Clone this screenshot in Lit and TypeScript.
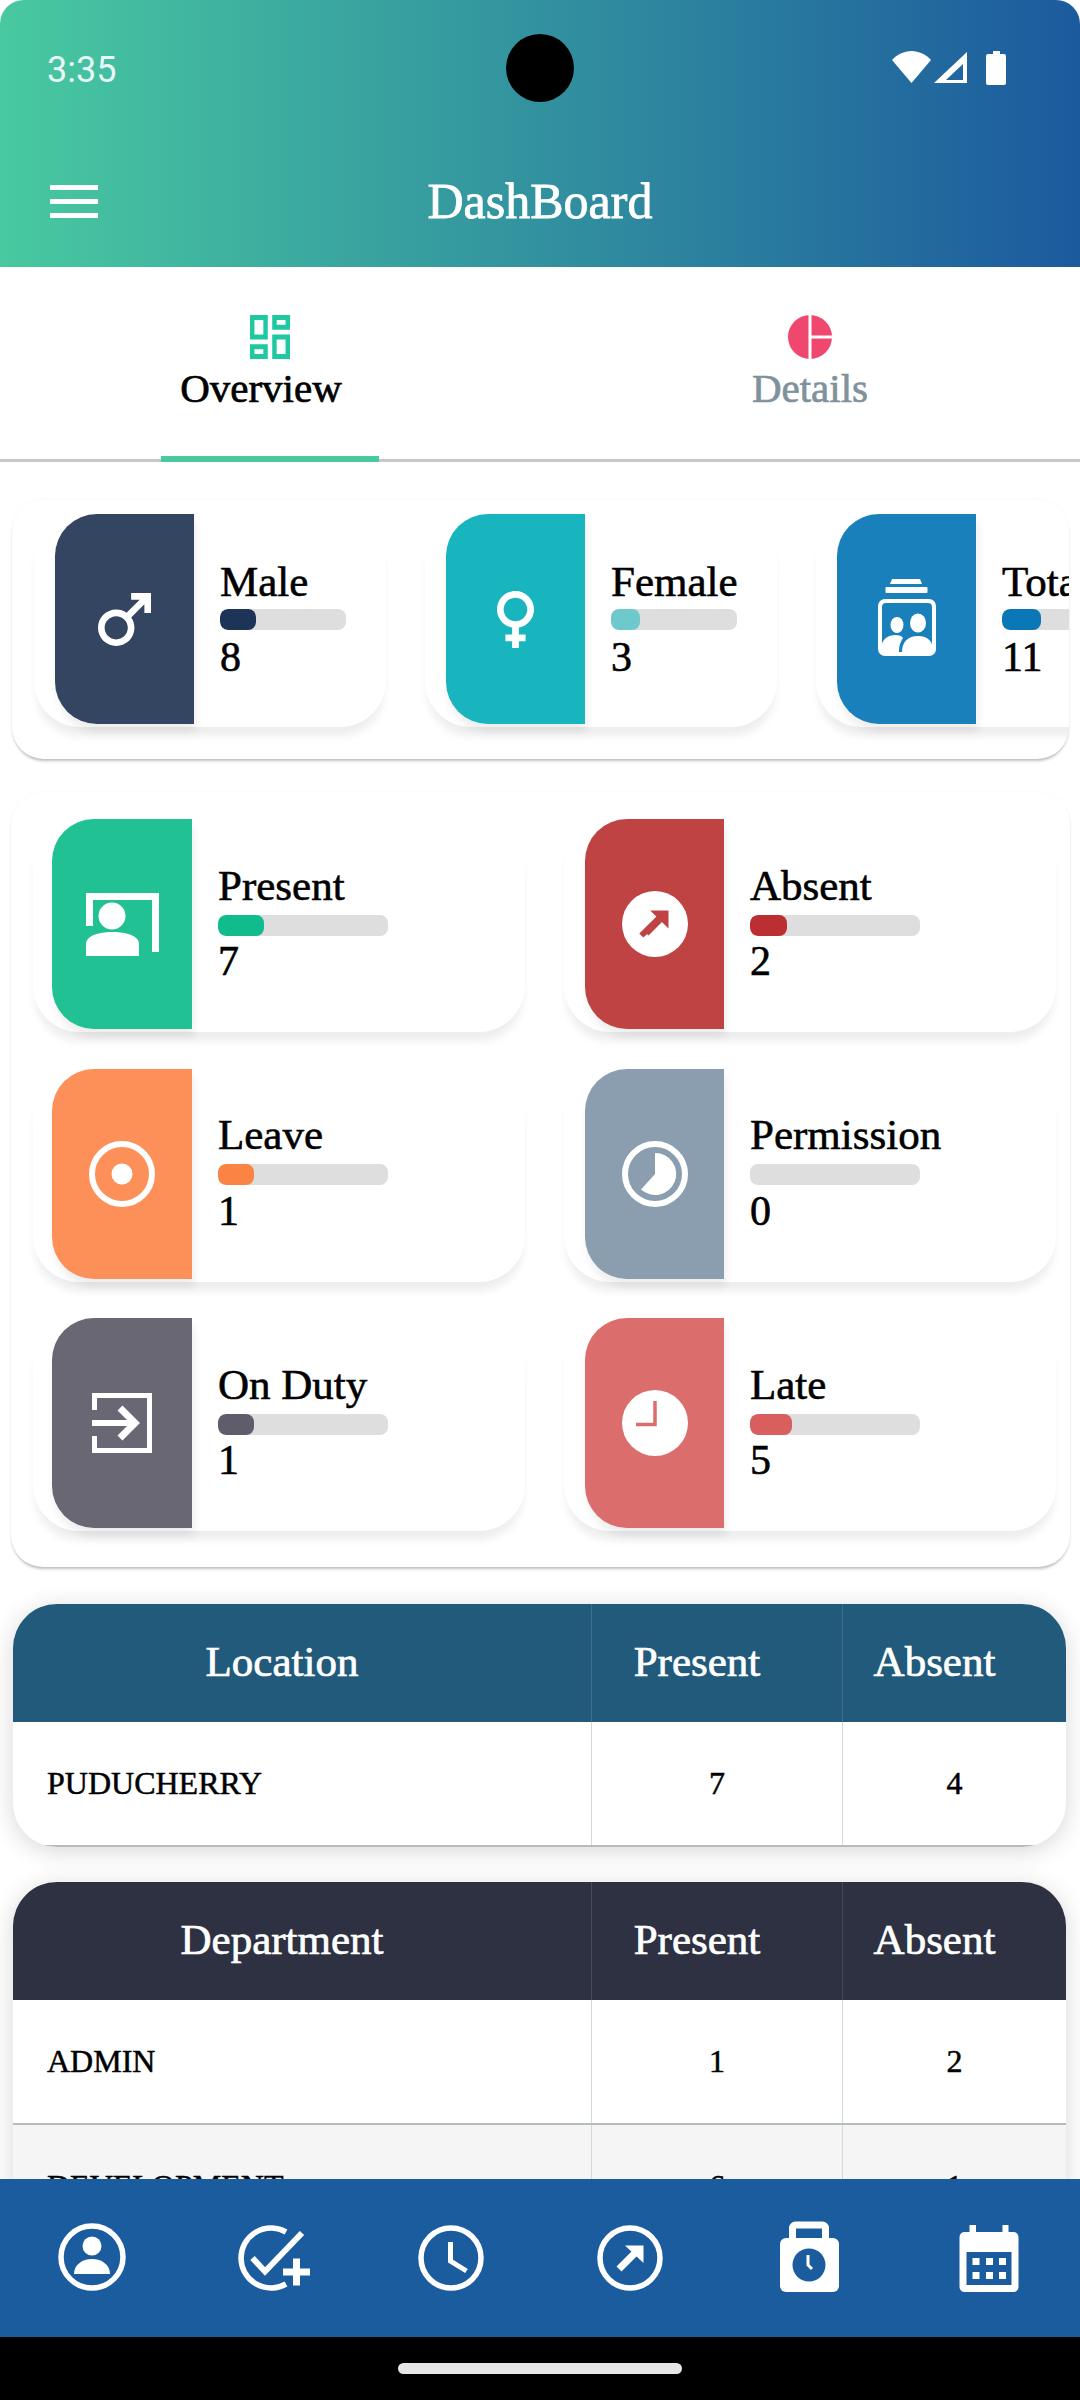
import { LitElement, html, css, svg } from 'lit';
import { customElement } from 'lit/decorators.js';

type Stat = { label: string; value: string; color: string; fill: string; width: number; icon: unknown };

// panel icons
const maleIcon = html`<svg width="53" height="53" viewBox="4 4 16 16" fill="#fff"><path d="M9.5 11c1.93 0 3.5 1.57 3.5 3.5S11.43 18 9.5 18 6 16.43 6 14.5 7.57 11 9.5 11zm0-2C6.46 9 4 11.46 4 14.5S6.46 20 9.5 20s5.5-2.46 5.5-5.5c0-1.16-.36-2.23-.97-3.12L18 7.42V10h2V4h-6v2h2.58l-3.97 3.97C11.73 9.36 10.66 9 9.5 9z"/></svg>`;
const femaleIcon = html`<svg width="37" height="57" viewBox="6.5 4 11 17" preserveAspectRatio="none" fill="#fff"><path d="M17.5 9.5C17.5 6.46 15.04 4 12 4S6.5 6.46 6.5 9.5c0 2.7 1.94 4.93 4.5 5.4V17H9v2h2v2h2v-2h2v-2h-2v-2.1c2.56-.47 4.5-2.7 4.5-5.4zm-9 0C8.5 7.57 10.07 6 12 6s3.5 1.57 3.5 3.5S13.93 13 12 13s-3.5-1.57-3.5-3.5z"/></svg>`;
const totalIcon = html`<svg class="jar" width="58" height="77" viewBox="0 0 58 77" fill="#fff">
  <path d="M14 0h28l2 5H12z"/><rect x="7.5" y="8" width="42" height="6" rx="1"/>
  <rect x="0" y="20" width="58" height="57" rx="7"/>
  <rect x="4" y="24" width="50" height="49" rx="4" fill="#1a80bb"/>
  <ellipse cx="19" cy="46" rx="6.5" ry="8"/><ellipse cx="40" cy="44" rx="8" ry="9.5"/>
  <path d="M4 73V66C4 60 11 56 17 56c4 0 7 1 8 3-2 3-4 7-4 14z"/>
  <path d="M24 73c0-10 6-16 16-16s15 6 15 14v2z"/>
</svg>`;
const presentIcon = html`<svg width="73" height="63" viewBox="0 0 73 63" fill="#fff">
  <path d="M0 0h73v59h-7V7H7v26H0z"/><circle cx="26" cy="23" r="13.5"/>
  <path d="M0 63V51c0-8 12-12 26.500-12S53 43 53 51v12z"/>
</svg>`;
const absentIcon = html`<svg width="66" height="66" viewBox="-33 -33 66 66">
  <circle r="33" fill="#fff"/>
  <path d="M-4.800 -13.500H13.500V4.500zM-11.700 13.500l-4-4L3 -9l4 6z" fill="#bf4343"/>
  <path d="M-9 9L7 -7" stroke="#bf4343" stroke-width="7" fill="none"/>
</svg>`;
const leaveIcon = html`<svg width="66" height="66" viewBox="-33 -33 66 66">
  <circle r="30" fill="none" stroke="#fff" stroke-width="6"/><circle r="10.500" fill="#fff"/>
</svg>`;
const permissionIcon = html`<svg width="66" height="66" viewBox="-33 -33 66 66">
  <circle r="30" fill="none" stroke="#fff" stroke-width="6"/>
  <path d="M0 0V-21A21 21 0 1 1 -14 15.500Z" fill="#fff"/>
</svg>`;
const dutyIcon = html`<svg width="60" height="60" viewBox="0 0 60 60" fill="none" stroke="#fff" stroke-width="5">
  <path d="M2.500 17V2.500H57.500V57.500H2.500V43"/>
  <path d="M0 30H42" stroke-width="6"/><path d="M28 15L43 30L28 45" stroke-width="7"/>
</svg>`;
const lateIcon = html`<svg width="66" height="66" viewBox="-33 -33 66 66">
  <circle r="33" fill="#fff"/>
  <path d="M0 -22V1.500H-19" fill="none" stroke="#dc6d6d" stroke-width="3.500"/>
</svg>`;

const genderStats: Stat[] = [
  { label: 'Male', value: '8', color: '#344562', fill: '#1e3358', width: 36, icon: maleIcon },
  { label: 'Female', value: '3', color: '#19b5bf', fill: '#6ec9cc', width: 29, icon: femaleIcon },
  { label: 'Total', value: '11', color: '#1a80bb', fill: '#0a78b6', width: 39, icon: totalIcon },
];

const attendStats: Stat[] = [
  { label: 'Present', value: '7', color: '#22c193', fill: '#10bb8c', width: 46, icon: presentIcon },
  { label: 'Absent', value: '2', color: '#bf4343', fill: '#bb2f32', width: 37, icon: absentIcon },
  { label: 'Leave', value: '1', color: '#fd8f59', fill: '#fb8344', width: 36, icon: leaveIcon },
  { label: 'Permission', value: '0', color: '#8a9eaf', fill: '#8a9eaf', width: 0, icon: permissionIcon },
  { label: 'On Duty', value: '1', color: '#6a6775', fill: '#5f5c6c', width: 36, icon: dutyIcon },
  { label: 'Late', value: '5', color: '#dc6d6d', fill: '#d95f5f', width: 42, icon: lateIcon },
];

const locationRows = [['PUDUCHERRY', '7', '4']];
const departmentRows = [['ADMIN', '1', '2'], ['DEVELOPMENT', '6', '1']];

// bottom navigation, all drawn around the centre of an 80 box
const navIcons = [
  svg`<circle cx="40" cy="39" r="31" fill="none" stroke="#fff" stroke-width="5.500"/>
    <circle cx="40" cy="28" r="9.500" fill="#fff"/>
    <path d="M22 56c0-9 8-15 18-15s18 6 18 15z" fill="#fff"/>`,
  svg`<path d="M55 14A30 30 0 1 0 55 66" fill="none" stroke="#fff" stroke-width="5.500"/>
    <path d="M21.500 40L34 53.500L71 15" fill="none" stroke="#fff" stroke-width="6"/>
    <path d="M52 54H79M65.500 40.500V67.500" fill="none" stroke="#fff" stroke-width="7"/>`,
  svg`<circle cx="40" cy="40" r="30" fill="none" stroke="#fff" stroke-width="5.500"/>
    <path d="M39.500 24V43L55.500 53" fill="none" stroke="#fff" stroke-width="5"/>`,
  svg`<circle cx="40" cy="40" r="30" fill="none" stroke="#fff" stroke-width="5.500"/>
    <path d="M35 27.500H53.500V45z" fill="#fff"/>
    <path d="M29 51L46 34" fill="none" stroke="#fff" stroke-width="7"/>`,
  svg`<path d="M23.500 24V10a3 3 0 0 1 3-3h27a3 3 0 0 1 3 3V24" fill="none" stroke="#fff" stroke-width="7"/>
    <rect x="11" y="20" width="59" height="54" rx="6" fill="#fff"/>
    <circle cx="40" cy="47" r="16.500" fill="#1b5c9e"/>
    <path d="M39 37V47L43 51" fill="none" stroke="#fff" stroke-width="3"/>`,
  svg`<path d="M20.500 7H27V14H53.500V7H59.500V14H64a5 5 0 0 1 5.500 5V69a5 5 0 0 1-5.500 5H16a5 5 0 0 1-5.500-5V19a5 5 0 0 1 5.500-5H20.500z" fill="#fff"/>
    <rect x="17.500" y="34" width="45" height="33" fill="#1b5c9e"/>
    <path d="M23.500 40h7v7h-7zM37 40h7v7h-7zM50 40h7v7h-7zM23.500 54h7v7h-7zM37 54h7v7h-7zM50 54h7v7h-7z" fill="#fff"/>`,
];

@customElement('app-root')
export class AppRoot extends LitElement {
  static styles = css`
    :host {
      display: block;
      background: #fff;
      color: #000;
      font-family: 'Liberation Serif', serif;
    }

    .screen {
      height: 2400px;
      display: flex;
      flex-direction: column;
      overflow: hidden;
      position: relative;
    }

    /* header */
    .header {
      height: 267px;
      flex: none;
      border-radius: 24px 24px 0 0;
      background: linear-gradient(90deg, #48c9a0 0%, #1c5a9e 100%);
      color: #fff;
      position: relative;
    }
    .status {
      height: 136px;
      display: flex;
      align-items: center;
      justify-content: space-between;
      padding: 0 74px 0 47px;
    }
    .time {
      font-family: Roboto, sans-serif;
      font-weight: 400;
      font-size: 36px;
      padding-top: 3px;
      color: rgba(255, 255, 255, 0.9);
    }
    .camera {
      position: absolute;
      left: 506px;
      top: 34px;
      width: 68px;
      height: 68px;
      border-radius: 50%;
      background: #000;
    }
    .appbar {
      height: 131px;
      display: grid;
      grid-template-columns: 1fr auto 1fr;
      align-items: center;
      padding-left: 50px;
      padding-right: 50px;
    }
    .burger {
      width: 48px;
      display: flex;
      flex-direction: column;
      gap: 9px;
    }
    .burger span {
      height: 5px;
      background: #fff;
    }
    .title {
      font-size: 50px;
      padding-bottom: 2px;
      -webkit-text-stroke: 0.8px #fff;
    }

    /* tabs */
    .tabs {
      height: 195px;
      flex: none;
      display: grid;
      grid-template-columns: 1fr 1fr;
      border-bottom: 3px solid #c8c8c8;
      box-sizing: border-box;
      position: relative;
    }
    .tab {
      display: flex;
      flex-direction: column;
      align-items: center;
      padding-top: 48px;
      font-size: 41px;
      line-height: 46px;
      -webkit-text-stroke: 0.7px currentColor;
    }
    .tab svg {
      display: block;
      margin-bottom: 6px;
      height: 44px;
    }
    .tab.muted {
      color: #7f929c;
    }
    .tab .shift {
      margin-right: 18px;
    }
    .indicator {
      position: absolute;
      left: 161px;
      bottom: -3px;
      width: 218px;
      height: 6px;
      background: #48c9a0;
    }

    /* stat cards */
    .content {
      flex: 1;
      overflow: hidden;
      min-height: 0;
    }
    .section {
      background: #fff;
      border-radius: 32px;
      box-shadow: 0 3px 3px -1px rgba(0, 0, 0, 0.25), 0 0 3px rgba(0, 0, 0, 0.04);
      overflow: hidden;
    }
    .gender {
      margin: 38px 11px 0 12px;
      padding: 14px 0 32px 22px;
      display: flex;
      gap: 39px;
    }
    .gender .stat {
      width: 352px;
      flex: none;
      padding-left: 21px;
    }
    .attend {
      margin: 33px 10px 0 11px;
      padding: 27px 14px 36px 22px;
      display: grid;
      grid-template-columns: 492px 492px;
      column-gap: 39px;
      row-gap: 36.5px;
    }
    .stat {
      display: flex;
      height: 213px;
      box-sizing: border-box;
      padding-left: 21px;
      background: #fff;
      border-radius: 46px;
      box-shadow: 0 11px 9px -2px rgba(0, 0, 0, 0.07);
    }
    .attend .stat:nth-child(odd) {
      padding-left: 19px;
    }
    .attend .stat:nth-child(odd) .panel {
      width: 140px;
    }
    .panel {
      width: 139px;
      height: 210px;
      flex: none;
      display: flex;
      align-items: center;
      justify-content: center;
      border-radius: 42px 0 0 42px;
      box-shadow: 2px 8px 8px rgba(0, 0, 0, 0.07);
    }
    .jar {
      margin-top: -3px;
    }
    .info {
      padding: 44.5px 0 0 26px;
    }
    .gender .info {
      padding-top: 46px;
    }
    .label {
      font-size: 43px;
      line-height: 44px;
      white-space: nowrap;
      -webkit-text-stroke: 0.6px #000;
    }
    .track {
      width: 170px;
      height: 21px;
      margin-top: 7px;
      background: #dedede;
      border-radius: 8px;
      overflow: hidden;
    }
    .gender .track {
      width: 126px;
      margin-top: 5px;
    }
    .fill {
      height: 100%;
      border-radius: 8px;
    }
    .value {
      margin-top: 3.5px;
      font-size: 42px;
      line-height: 44px;
      -webkit-text-stroke: 0.6px #000;
    }
    .gender .value {
      margin-top: 4.5px;
    }

    /* tables */
    .table {
      margin: 37px 14px 0 13px;
      border-radius: 44px;
      background: #fff;
      overflow: hidden;
      box-shadow: 0 4px 24px rgba(0, 0, 0, 0.16);
    }
    .table + .table {
      margin-top: 35px;
    }
    .row {
      display: grid;
      grid-template-columns: 579px 251px 223px;
      height: 125px;
      border-bottom: 2px solid #b4bcc0;
      box-sizing: border-box;
      font-size: 32px;
      -webkit-text-stroke: 0.5px #000;
    }
    .row.head {
      height: 118px;
      color: #fff;
      border-bottom: none;
      font-size: 43px;
      -webkit-text-stroke: 0.7px #fff;
    }
    .row.location {
      background: #225a7c;
    }
    .row.department {
      background: #2e3142;
    }
    .row.even {
      background: #f5f5f5;
    }
    .cell {
      display: flex;
      align-items: center;
      justify-content: center;
      border-right: 1px solid #d4d8da;
    }
    .cell:last-child {
      border-right: none;
    }
    .cell.name {
      justify-content: flex-start;
      padding-left: 34px;
    }
    .head .cell {
      padding: 0 40px 3px 0;
      border-right-color: rgba(255, 255, 255, 0.12);
    }

    /* bottom nav */
    .nav {
      height: 158px;
      flex: none;
      box-sizing: border-box;
      padding: 39px 0 0 2.4px;
      background: #1b5c9e;
      display: grid;
      grid-template-columns: repeat(6, 179.3px);
      justify-items: center;
      align-items: start;
    }
    .nav svg {
      display: block;
    }
    .gesture {
      height: 63px;
      flex: none;
      background: #000;
      display: flex;
      justify-content: center;
      padding-top: 26px;
      box-sizing: border-box;
    }
    .gesture span {
      width: 284px;
      height: 11px;
      border-radius: 6px;
      background: #e6e6e6;
    }
  `;

  private renderStat(s: Stat) {
    return html`
      <div class="stat">
        <div class="panel" style="background:${s.color}">${s.icon}</div>
        <div class="info">
          <div class="label">${s.label}</div>
          <div class="track"><div class="fill" style="width:${s.width}px;background:${s.fill}"></div></div>
          <div class="value">${s.value}</div>
        </div>
      </div>
    `;
  }

  private renderTable(name: string, cls: string, rows: string[][]) {
    return html`
      <div class="table">
        <div class="row head ${cls}">
          <div class="cell">${name}</div>
          <div class="cell">Present</div>
          <div class="cell">Absent</div>
        </div>
        ${rows.map(
          (r, i) => html`
            <div class="row ${i % 2 ? 'even' : ''}">
              <div class="cell name">${r[0]}</div>
              <div class="cell">${r[1]}</div>
              <div class="cell">${r[2]}</div>
            </div>
          `
        )}
      </div>
    `;
  }

  render() {
    return html`
      <div class="screen">
        <div class="header">
          <div class="status">
            <span class="time">3:35</span>
            <svg width="114" height="36" viewBox="0 0 114 36" fill="#fff">
              <path d="M0 10C5 4.500 12 1 19.500 1S34 4.500 39 10L19.500 33Z"/>
              <path fill-rule="evenodd" d="M42 33L75 2V33ZM54 30H71V14Z"/>
              <path d="M94 6a2 2 0 0 1 2-2h5V1h7v3h4a2 2 0 0 1 2 2V33a2 2 0 0 1-2 2H96a2 2 0 0 1-2-2Z"/>
            </svg>
          </div>
          <div class="camera"></div>
          <div class="appbar">
            <div class="burger"><span></span><span></span><span></span></div>
            <div class="title">DashBoard</div>
            <div></div>
          </div>
        </div>

        <div class="tabs">
          <div class="tab">
            <svg width="40" viewBox="3 3 18 18" preserveAspectRatio="none" fill="#1fc8a0">
              <path d="M19 5v2h-4V5h4M9 5v6H5V5h4m10 8v6h-4v-6h4M9 17v2H5v-2h4M21 3h-8v6h8V3zM11 3H3v10h8V3zm10 8h-8v10h8V11zm-10 4H3v6h8v-6z"/>
            </svg>
            <span class="shift">Overview</span>
          </div>
          <div class="tab muted">
            <svg width="44" viewBox="-22 -22 44 44">
              <circle r="22" fill="#f0476f"/>
              <path d="M0 -22V22M0 0H22" stroke="#fff" stroke-width="3" fill="none"/>
            </svg>
            <span>Details</span>
          </div>
          <div class="indicator"></div>
        </div>

        <div class="content">
          <div class="section gender">${genderStats.map((s) => this.renderStat(s))}</div>
          <div class="section attend">${attendStats.map((s) => this.renderStat(s))}</div>
          ${this.renderTable('Location', 'location', locationRows)}
          ${this.renderTable('Department', 'department', departmentRows)}
        </div>

        <div class="nav">
          ${navIcons.map((icon) => html`<svg width="80" height="80" viewBox="0 0 80 80">${icon}</svg>`)}
        </div>
        <div class="gesture"><span></span></div>
      </div>
    `;
  }
}
